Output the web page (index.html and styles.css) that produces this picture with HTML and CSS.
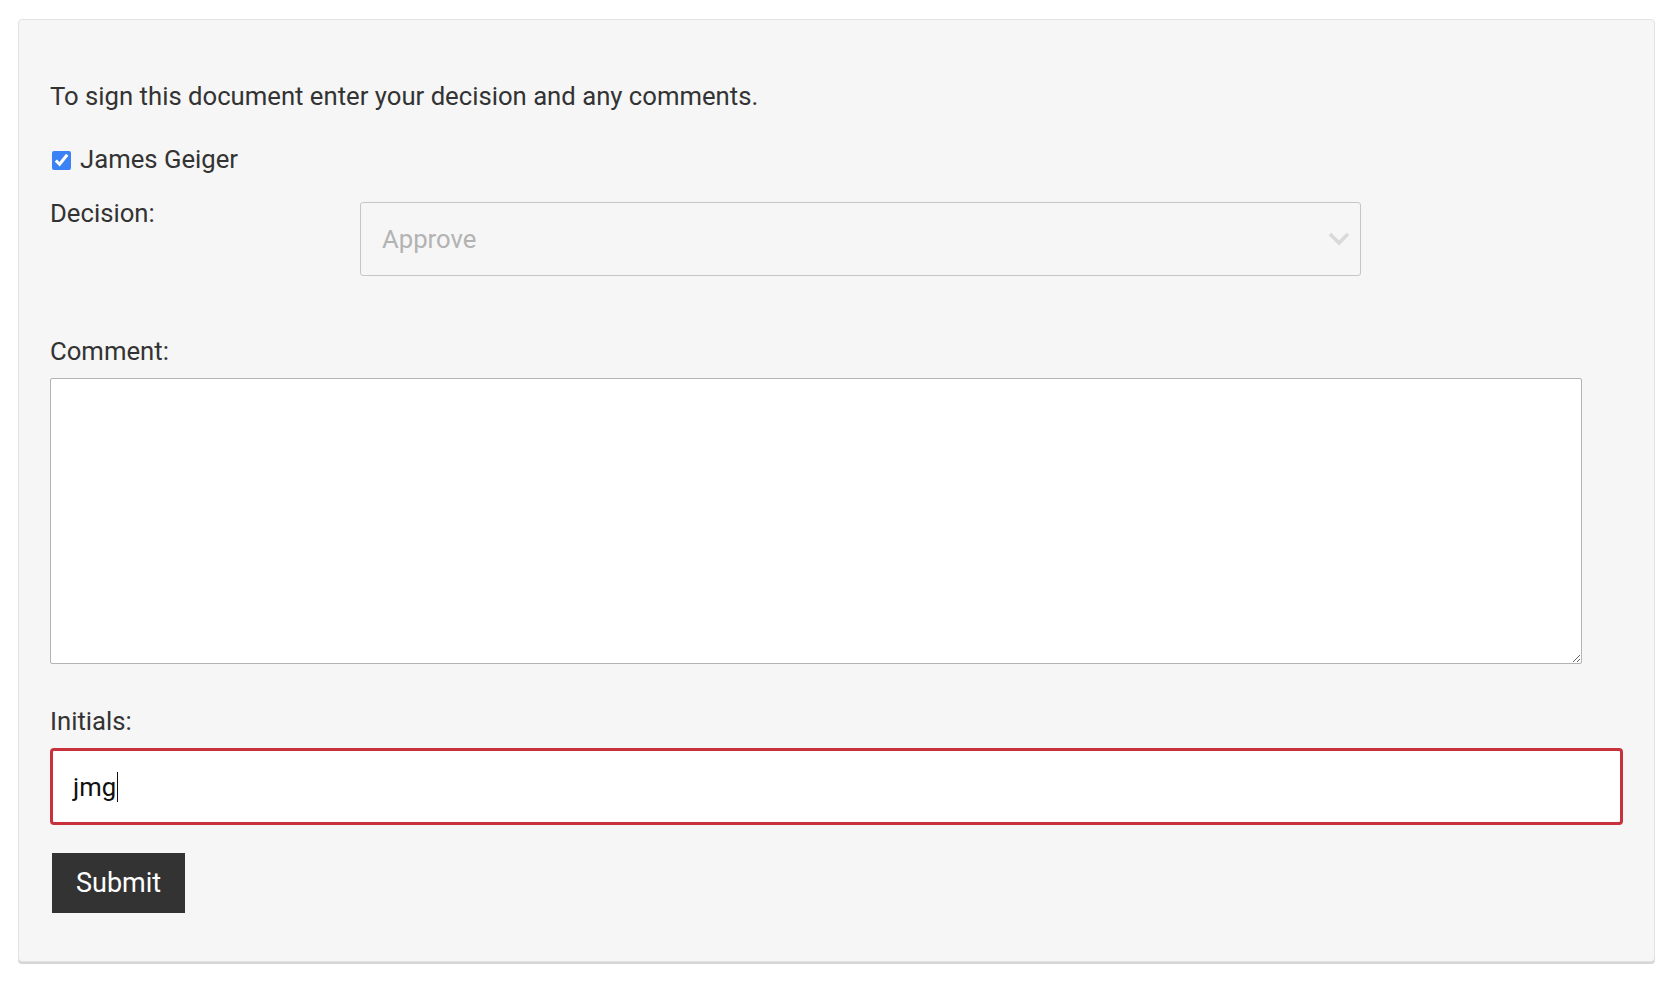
FILE: index.html
```html
<!DOCTYPE html>
<html>
<head>
    <meta charset="UTF-8">
    <title>Sign document</title>
    <link rel="stylesheet" href="styles.css">
</head>
<body>
    <form class="sign-panel">
        <p class="intro">To sign this document enter your decision and any comments.</p>

        <label class="signer">
            <input type="checkbox" checked>
            <span>James Geiger</span>
        </label>

        <div class="decision-row">
            <label class="field-label" for="decision">Decision:</label>
            <div class="select-wrap">
                <select id="decision" class="decision-select">
                    <option>Approve</option>
                    <option>Reject</option>
                </select>
                <svg class="chevron" width="22" height="14" viewBox="0 0 22 14">
                    <path d="M2 2 L11 11 L20 2" fill="none" stroke="#d9d9d9" stroke-width="3.5"/>
                </svg>
            </div>
        </div>

        <label class="field-label comment-label" for="comment">Comment:</label>
        <textarea id="comment" class="comment-box"></textarea>

        <label class="field-label initials-label">Initials:</label>
        <div class="initials-input" contenteditable="true">jmg<span class="caret"></span></div>

        <button type="button" class="submit-button">Submit</button>
    </form>
</body>
</html>
```

FILE: styles.css
```css
body {
    margin: 0;
    padding: 19px 25px 19px 18px;
    background-color: #ffffff;
    font-family: Roboto, "Liberation Sans", Arial, sans-serif;
    font-size: 25.7px;
    line-height: 36px;
    color: #333333;
}

.sign-panel {
    display: flex;
    flex-direction: column;
    align-items: flex-start;
    background-color: #f6f6f6;
    border: 1px solid #e2e2e2;
    border-radius: 4px;
    box-shadow: 0 2px 0 #d6d6d6;
    padding: 58px 31px 48px;
}

.intro {
    margin: 0 0 27px;
}

.signer {
    display: flex;
    align-items: center;
    margin-bottom: 18px;
}

.signer input {
    width: 19px;
    height: 19px;
    margin: 2px 9px 0 2px;
    accent-color: #3b82f6;
}

.decision-row {
    display: flex;
    align-items: flex-start;
    width: 100%;
}

.field-label {
    display: block;
}

.decision-row .field-label {
    width: 310px;
    flex-shrink: 0;
}

/* Селект с собственной стрелкой */
.select-wrap {
    position: relative;
    margin-top: 7px;
    width: 1001px;
}

.decision-select {
    appearance: none;
    -webkit-appearance: none;
    width: 100%;
    height: 74px;
    padding: 0 50px 0 21px;
    font-family: inherit;
    font-size: 25.7px;
    color: #b3b3b3;
    background-color: #f6f6f6;
    border: 1px solid #c6c6c6;
    border-radius: 3px;
}

.chevron {
    position: absolute;
    right: 11px;
    top: 30px;
    pointer-events: none;
}

.comment-label {
    margin-top: 57px;
    margin-bottom: 9px;
}

.comment-box {
    box-sizing: border-box;
    width: 1532px;
    height: 286px;
    background-color: #ffffff;
    border: 1px solid #b4b4b4;
    border-radius: 2px;
    font-family: inherit;
    font-size: 25.7px;
}

.initials-label {
    margin-top: 39px;
    margin-bottom: 9px;
}

/* Поле инициалов с видимым курсором */
.initials-input {
    box-sizing: border-box;
    display: flex;
    align-items: center;
    width: 100%;
    height: 77px;
    padding: 0 20px;
    font-size: 25.7px;
    color: #111111;
    background-color: #ffffff;
    border: 3px solid #c8323c;
    border-radius: 4px;
    outline: none;
}

.caret {
    display: inline-block;
    width: 0;
    height: 30px;
    margin-left: 1px;
    border-left: 1.5px solid #111111;
}

.submit-button {
    margin: 28px 0 0 2px;
    padding: 12px 24px;
    font-family: inherit;
    font-size: 27px;
    line-height: 36px;
    color: #ffffff;
    background-color: #333333;
    border: none;
    border-radius: 0;
    cursor: pointer;
}
```
